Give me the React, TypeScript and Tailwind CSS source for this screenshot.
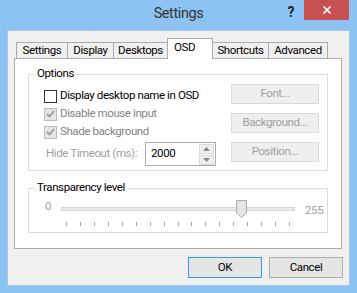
import { X } from "lucide-react";

const tabs = [
  { name: "Settings", w: "w-[52px]" },
  { name: "Display", w: "w-[47px]" },
  { name: "Desktops", w: "w-[55px]" },
  { name: "OSD", w: "w-[46px]", active: true },
  { name: "Shortcuts", w: "w-[57px]" },
  { name: "Advanced", w: "w-[60px]" },
];

const ticks = Array.from({ length: 17 });

const Check = ({ checked, disabled }: { checked?: boolean; disabled?: boolean }) => (
  <div
    className={
      disabled
        ? "w-[13px] h-[13px] border border-[#bcbcbc] bg-[#e6e6e6] flex items-center justify-center"
        : "w-[13px] h-[13px] border border-[#333333] bg-white flex items-center justify-center"
    }
  >
    {checked && (
      <svg width="9" height="8" viewBox="0 0 9 8">
        <path d="M1 4 L3.5 6.5 L8 1" fill="none" stroke="#9a9a9a" strokeWidth="1.8" />
      </svg>
    )}
  </div>
);

const DisabledButton = ({ label }: { label: string }) => (
  <div className="w-[88px] h-[20px] border border-[#d9d9d9] bg-[#efefef] text-[#a0a0a0] flex items-center justify-center">
    {label}
  </div>
);

const App = () => {
  return (
    <div className="w-[357px] h-[293px] bg-[#8cc3f3] flex flex-col font-['Roboto','Noto_Sans',sans-serif] text-[11.5px] tracking-[-0.4px] text-black leading-none overflow-hidden">
      {/* title bar */}
      <div className="h-[30px] relative flex items-center justify-center">
        <span className="text-[14.5px] text-[#333333] -mt-[1px]">Settings</span>
        <div className="absolute right-[8px] top-0 flex items-start">
          <span className="text-[14px] font-bold text-[#222] mt-[5px] mr-[10px]">?</span>
          <div className="w-[45px] h-[20px] bg-[#c75050] flex items-center justify-center">
            <X className="w-[12px] h-[12px] text-white" strokeWidth={3.5} />
          </div>
        </div>
      </div>

      {/* client area */}
      <div className="ml-[7px] w-[343px] h-[256px] bg-[#f0f0f0] border border-[#a9c8e4] flex flex-col">
        {/* tab strip */}
        <div className="mt-[7px] ml-[8px] h-[20px] flex items-end relative z-10">
          {tabs.map((t, i) =>
            t.active ? (
              <div
                key={t.name}
                className={`${t.w} ${i > 0 ? "-ml-px" : ""} h-[21px] -mb-px bg-white border border-b-0 border-[#acacac] flex items-center pl-[6px] pb-[3px] relative z-10`}
              >
                {t.name}
              </div>
            ) : (
              <div
                key={t.name}
                className={`${t.w} ${i > 0 ? "-ml-px" : ""} h-[16px] bg-[#f0f0f0] border border-b-0 border-[#acacac] flex items-center justify-center`}
              >
                {t.name}
              </div>
            )
          )}
        </div>

        {/* tab panel */}
        <div className="ml-[6px] w-[328px] h-[191px] bg-white border border-[#acacac] flex flex-col">
          {/* Options group */}
          <div className="mt-[15px] ml-[13px] w-[300px] h-[97px] border border-[#dcdcdc] relative flex">
            <span className="absolute -top-[7px] left-[6px] bg-white px-[2px]">Options</span>
            <div className="flex flex-col pt-[12px] pl-[15px]">
              <div className="h-[18px] flex items-center gap-[3px]">
                <Check />
                <span>Display desktop name in OSD</span>
              </div>
              <div className="h-[18px] flex items-center gap-[3px] text-[#838383]">
                <Check checked disabled />
                <span>Disable mouse input</span>
              </div>
              <div className="h-[18px] flex items-center gap-[3px] text-[#838383]">
                <Check checked disabled />
                <span>Shade background</span>
              </div>
              <div className="h-[24px] mt-[1px] flex items-center">
                <span className="ml-[2px] w-[99px] whitespace-nowrap text-[#a0a0a0]">Hide Timeout (ms):</span>
                <div className="w-[71px] h-[24px] border border-[#abadb3] bg-white flex items-center">
                  <span className="ml-[5px]">2000</span>
                  <div className="ml-auto mr-[1px] flex flex-col gap-[1px]">
                    <div className="w-[15px] h-[10px] bg-[#f0f0f0] border border-[#d9d9d9] flex items-center justify-center">
                      <svg width="7" height="4" viewBox="0 0 7 4">
                        <path d="M3.5 0 L7 4 L0 4 Z" fill="#8a8a8a" />
                      </svg>
                    </div>
                    <div className="w-[15px] h-[10px] bg-[#f0f0f0] border border-[#d9d9d9] flex items-center justify-center">
                      <svg width="7" height="4" viewBox="0 0 7 4">
                        <path d="M0 0 L7 0 L3.5 4 Z" fill="#8a8a8a" />
                      </svg>
                    </div>
                  </div>
                </div>
              </div>
            </div>
            <div className="ml-auto mr-[8px] pt-[9px] flex flex-col gap-[9px]">
              <DisabledButton label="Font..." />
              <DisabledButton label="Background..." />
              <DisabledButton label="Position..." />
            </div>
          </div>

          {/* Transparency group */}
          <div className="mt-[17px] ml-[13px] w-[300px] h-[45px] border border-[#dcdcdc] relative flex">
            <span className="absolute -top-[7px] left-[6px] bg-white px-[2px]">Transparency level</span>
            <div className="flex items-start pt-[12px] pl-[16px] text-[#a0a0a0]">
              <span className="w-[16px]">0</span>
              <div className="w-[234px] relative">
                <div className="mt-[6px] h-[4px] bg-[#e7eaea] border border-[#d6d6d6]" />
                <div className="flex justify-between px-[5px] mt-[11px]">
                  {ticks.map((_, i) => (
                    <div key={i} className="w-px h-[4px] bg-[#a0a0a0]" />
                  ))}
                </div>
                <svg className="absolute left-[175px] -top-[1px]" width="11" height="18" viewBox="0 0 11 18">
                  <path d="M0.5 0.5 H10.5 V13 L5.5 17.5 L0.5 13 Z" fill="#e5e5e5" stroke="#acacac" />
                </svg>
              </div>
              <span className="ml-[10px] mt-[4px]">255</span>
            </div>
          </div>
        </div>

        {/* dialog buttons */}
        <div className="mt-[8px] mr-[6px] flex justify-end gap-[7px]">
          <div className="w-[74px] h-[21px] border border-[#3399ff] bg-[#e5e5e5] flex items-center justify-center">
            OK
          </div>
          <div className="w-[74px] h-[21px] border border-[#acacac] bg-[#e5e5e5] flex items-center justify-center">
            Cancel
          </div>
        </div>
      </div>
    </div>
  );
};

export default App;
